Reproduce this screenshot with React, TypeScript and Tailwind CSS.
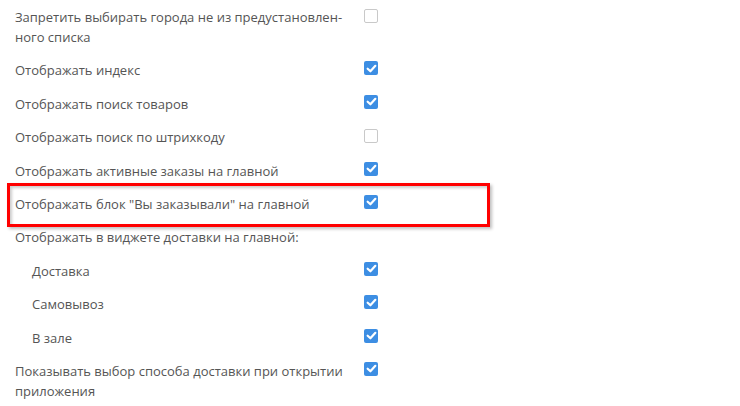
import type { ReactNode } from 'react';

type Row = {
  label: ReactNode;
  checked?: boolean;
  indent?: boolean;
  header?: boolean;
  highlight?: boolean;
};

const rows: Row[] = [
  {
    label: (
      <>
        Запретить выбирать города не из предустановлен-
        <br />
        ного списка
      </>
    ),
    checked: false,
  },
  { label: 'Отображать индекс', checked: true },
  { label: 'Отображать поиск товаров', checked: true },
  { label: 'Отображать поиск по штрихкоду', checked: false },
  { label: 'Отображать активные заказы на главной', checked: true },
  { label: 'Отображать блок "Вы заказывали" на главной', checked: true, highlight: true },
  { label: 'Отображать в виджете доставки на главной:', header: true },
  { label: 'Доставка', checked: true, indent: true },
  { label: 'Самовывоз', checked: true, indent: true },
  { label: 'В зале', checked: true, indent: true },
  {
    label: (
      <>
        Показывать выбор способа доставки при открытии
        <br />
        приложения
      </>
    ),
    checked: true,
  },
];

function Checkbox({ checked }: { checked?: boolean }) {
  if (checked) {
    return (
      <span className="mt-[1px] flex h-[14px] w-[14px] shrink-0 items-center justify-center rounded-[2px] bg-[#3d8ee3]">
        <svg width="11" height="11" viewBox="0 0 10 10" fill="none">
          <path d="M1.5 5.2 L4 7.5 L8.5 2.6" stroke="white" strokeWidth="2" strokeLinecap="round" strokeLinejoin="round" />
        </svg>
      </span>
    );
  }
  return <span className="mt-[2px] h-[14px] w-[14px] shrink-0 rounded-[2px] border border-[#c9c9c9] bg-white" />;
}

export default function App() {
  return (
    <div
      className="min-h-[406px] w-[740px] bg-white pl-[15px] pt-[7px] text-[13px] leading-[20px] text-[#555555]"
      style={{ fontFamily: '"Open Sans", "DejaVu Sans", sans-serif' }}
    >
      <div className="flex flex-col gap-[13.4px]">
        {rows.map((row, i) => (
          <div key={i} className="relative flex items-start">
            {row.highlight && (
              <div className="pointer-events-none absolute -left-[8px] -top-[11px] h-[44px] w-[483px] border-[3px] border-[#ff0000] shadow-[2px_2px_3px_rgba(0,0,0,0.25),inset_2px_2px_3px_rgba(0,0,0,0.2)]" />
            )}
            <div className={row.indent ? 'w-[349px] pl-[17px]' : 'w-[349px]'}>{row.label}</div>
            {!row.header && <Checkbox checked={row.checked} />}
          </div>
        ))}
      </div>
    </div>
  );
}
